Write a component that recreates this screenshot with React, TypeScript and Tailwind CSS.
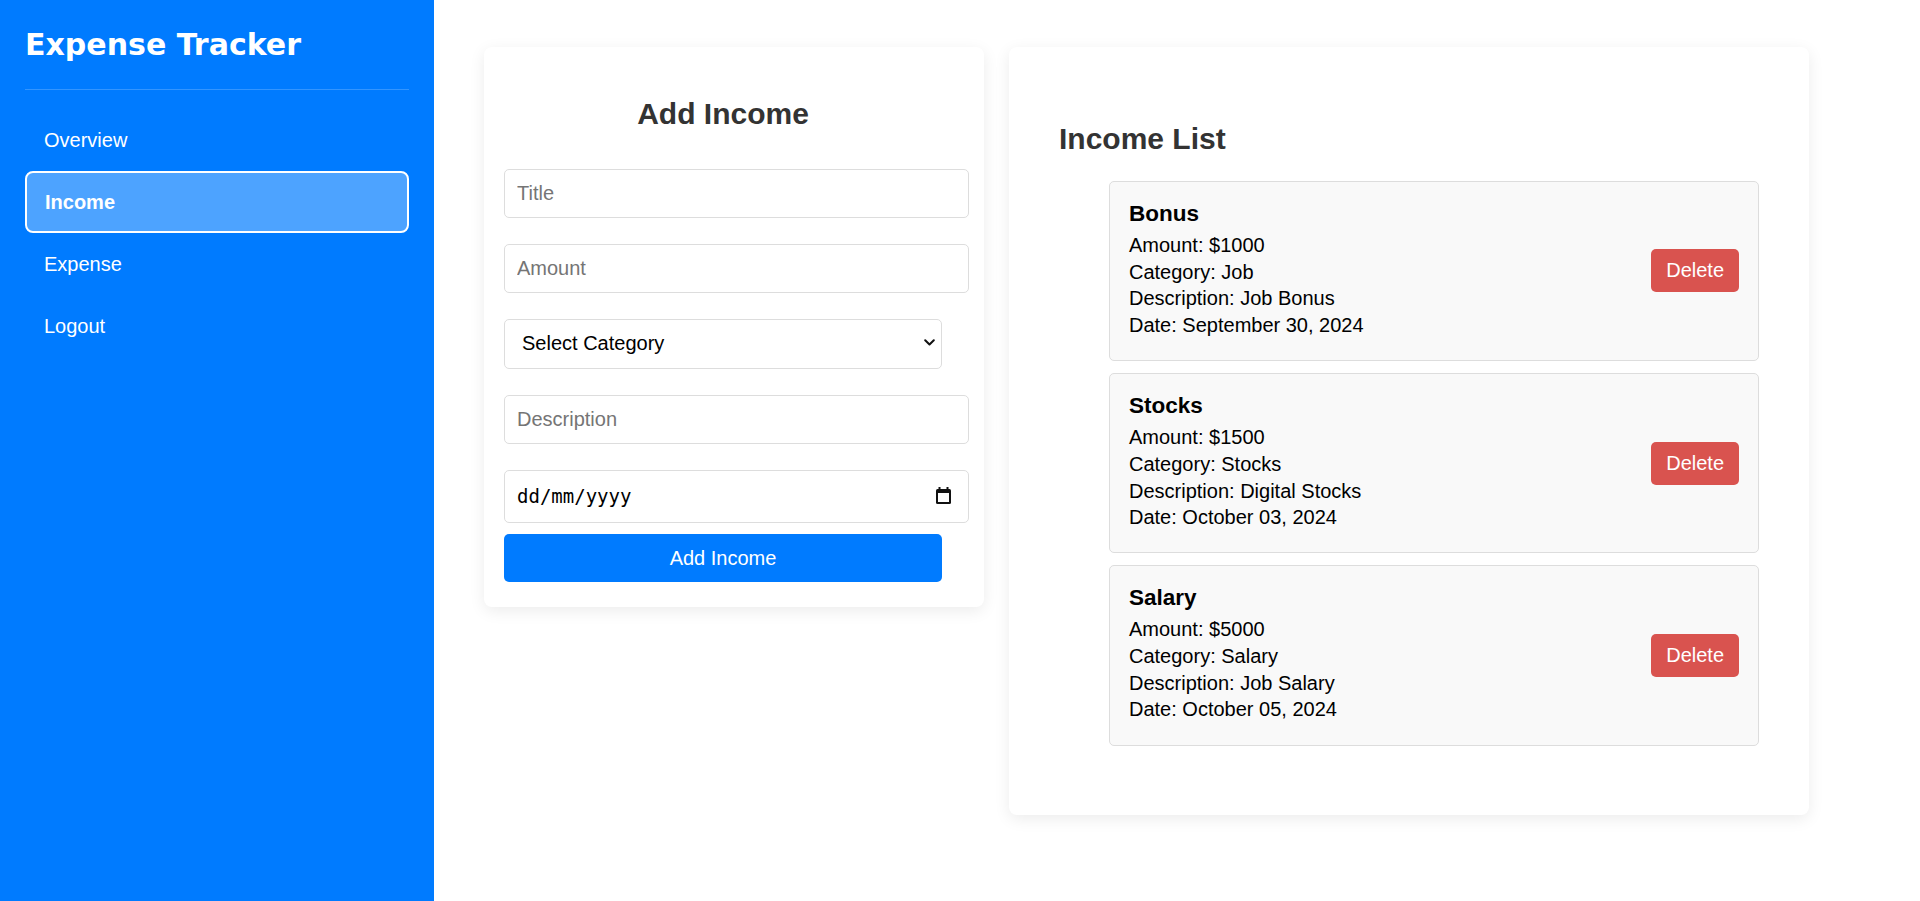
import React from "react";

const incomes = [
  { title: "Bonus", amount: 1000, category: "Job", description: "Job Bonus", date: "September 30, 2024" },
  { title: "Stocks", amount: 1500, category: "Stocks", description: "Digital Stocks", date: "October 03, 2024" },
  { title: "Salary", amount: 5000, category: "Salary", description: "Job Salary", date: "October 05, 2024" },
];

function CalendarIcon() {
  return (
    <svg width="15" height="17" viewBox="0 0 15 17" aria-hidden="true">
      <rect x="0" y="2" width="15" height="15" rx="1.5" fill="#111" />
      <rect x="2" y="6" width="11" height="9" fill="#fff" />
      <rect x="2.5" y="0" width="2" height="3" fill="#111" />
      <rect x="10.5" y="0" width="2" height="3" fill="#111" />
    </svg>
  );
}

function Chevron() {
  return (
    <svg width="11" height="7" viewBox="0 0 11 7" aria-hidden="true">
      <path d="M1.2 1.2 L5.5 5.5 L9.8 1.2" fill="none" stroke="#111" strokeWidth="2" strokeLinecap="round" strokeLinejoin="round" />
    </svg>
  );
}

export default function App() {
  const navItems = ["Overview", "Income", "Expense", "Logout"];
  return (
    <div className="flex min-h-screen bg-white font-['Liberation_Sans',Arial,sans-serif]">
      <aside className="w-[434px] shrink-0 bg-[#007bff] px-[25px] pt-[28px] text-white">
        <div className="border-b border-[rgba(255,255,255,0.2)] pb-[27px]">
          <h1 className="font-['DejaVu_Sans',sans-serif] text-[30px] font-bold leading-[34px]">
            Expense Tracker
          </h1>
        </div>
        <nav className="mt-[19px] flex flex-col">
          {navItems.map((item) =>
            item === "Income" ? (
              <div
                key={item}
                className="rounded-[8px] border-2 border-white bg-[rgba(255,255,255,0.3)] px-[18px] py-[17.5px] text-[20px] font-bold leading-[23px]"
              >
                {item}
              </div>
            ) : (
              <div key={item} className="px-[19px] py-[19.5px] text-[20px] leading-[23px]">
                {item}
              </div>
            )
          )}
        </nav>
      </aside>

      <main className="flex flex-1 items-start gap-[25px] pl-[50px] pt-[47px]">
        <section className="w-[500px] rounded-[8px] bg-white p-[20px] pb-[25px] shadow-[0_4px_16px_rgba(0,0,0,0.08)]">
          <h2 className="mt-[30px] w-[438px] text-center text-[30px] font-bold leading-[34.5px] text-[#333]">
            Add Income
          </h2>
          <form className="mt-[37px] flex flex-col" onSubmit={(e) => e.preventDefault()}>
            <input
              type="text"
              placeholder="Title"
              className="h-[49px] w-[465px] rounded-[5px] border border-[#ddd] bg-white px-[12px] text-[20px] leading-[23px] text-black outline-none placeholder:text-[#757575]"
            />
            <input
              type="text"
              placeholder="Amount"
              className="mt-[26px] h-[49px] w-[465px] rounded-[5px] border border-[#ddd] bg-white px-[12px] text-[20px] leading-[23px] text-black outline-none placeholder:text-[#757575]"
            />
            <div className="relative mt-[26px] h-[50px] w-[438px]">
              <select
                defaultValue=""
                className="h-[50px] w-[438px] appearance-none rounded-[5px] border border-[#ddd] bg-white pl-[17px] text-[20px] leading-[23px] text-black outline-none"
              >
                <option value="">Select Category</option>
                <option value="salary">Salary</option>
                <option value="job">Job</option>
                <option value="stocks">Stocks</option>
              </select>
              <span className="pointer-events-none absolute right-[7px] top-[20px] flex">
                <Chevron />
              </span>
            </div>
            <input
              type="text"
              placeholder="Description"
              className="mt-[26px] h-[49px] w-[465px] rounded-[5px] border border-[#ddd] bg-white px-[12px] text-[20px] leading-[23px] text-black outline-none placeholder:text-[#757575]"
            />
            <div className="relative mt-[26px] h-[53px] w-[465px]">
              <input
                type="text"
                readOnly
                placeholder="dd/mm/yyyy"
                className="h-[53px] w-[465px] rounded-[5px] border border-[#ddd] bg-white px-[12px] font-['DejaVu_Sans_Mono',monospace] text-[19px] text-black outline-none placeholder:text-black"
              />
              <span className="pointer-events-none absolute right-[18px] top-[17px] flex">
                <CalendarIcon />
              </span>
            </div>
            <button
              type="submit"
              className="mt-[11.5px] h-[48px] w-[438px] rounded-[5px] bg-[#007bff] text-[20px] leading-[23px] text-white"
            >
              Add Income
            </button>
          </form>
        </section>

        <section className="w-[800px] rounded-[8px] bg-white p-[50px] shadow-[0_4px_16px_rgba(0,0,0,0.08)]">
          <h2 className="mb-[24.5px] mt-[25px] text-[30px] font-bold leading-[34.5px] text-[#333]">Income List</h2>
          <ul className="mb-[19px] flex flex-col gap-[12px] pl-[50px]">
            {incomes.map((inc) => (
              <li
                key={inc.title}
                className="flex items-center justify-between rounded-[5px] border border-[#ddd] bg-[#f9f9f9] px-[19px] pb-[21.5px] pt-[19px]"
              >
                <div className="text-black">
                  <h3 className="mb-[5px] text-[22.5px] font-bold leading-[26px]">{inc.title}</h3>
                  <p className="text-[20px] leading-[26.67px]">Amount: ${inc.amount}</p>
                  <p className="text-[20px] leading-[26.67px]">Category: {inc.category}</p>
                  <p className="text-[20px] leading-[26.67px]">Description: {inc.description}</p>
                  <p className="text-[20px] leading-[26.67px]">Date: {inc.date}</p>
                </div>
                <button
                  type="button"
                  className="mt-[2px] h-[43px] rounded-[5px] bg-[#d9534f] px-[15px] text-[20px] leading-[23px] text-white"
                >
                  Delete
                </button>
              </li>
            ))}
          </ul>
        </section>
      </main>
    </div>
  );
}
